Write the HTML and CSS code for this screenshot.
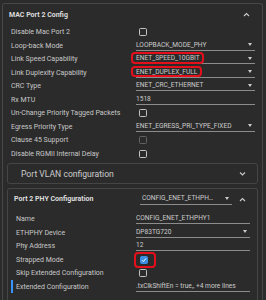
FILE: index.html
```html
<!DOCTYPE html>
<html>
<head>
<meta charset="utf-8">
<link rel="stylesheet" href="styles.css">
</head>
<body>
<div class="panel">
  <div class="panel-head">
    <span class="title">MAC Port 2 Config</span>
    <svg class="chev" width="7" height="5" viewBox="0 0 7 5"><polyline points="1,4 3.5,1.5 6,4" fill="none" stroke="#cccccc" stroke-width="1.1"/></svg>
  </div>
  <div class="rows">
    <div class="row"><span class="label">Disable Mac Port 2</span><span class="val"><span class="cb"></span></span></div>
    <div class="row"><span class="label">Loop-back Mode</span><span class="val"><span class="field select"><span class="txt">LOOPBACK_MODE_PHY</span><span class="arrow"></span></span></span></div>
    <div class="row"><span class="label">Link Speed Capability</span><span class="val"><span class="field select"><span class="txt hl">ENET_SPEED_10GBIT</span><span class="arrow"></span></span></span></div>
    <div class="row"><span class="label">Link Duplexity Capability</span><span class="val"><span class="field select"><span class="txt hl hl2">ENET_DUPLEX_FULL</span><span class="arrow"></span></span></span></div>
    <div class="row"><span class="label">CRC Type</span><span class="val"><span class="field select"><span class="txt">ENET_CRC_ETHERNET</span><span class="arrow"></span></span></span></div>
    <div class="row"><span class="label">Rx MTU</span><span class="val"><span class="field"><span class="txt">1518</span></span></span></div>
    <div class="row"><span class="label">Un-Change Priority Tagged Packets</span><span class="val"><span class="cb"></span></span></div>
    <div class="row"><span class="label">Egress Priority Type</span><span class="val"><span class="field select"><span class="txt">ENET_EGRESS_PRI_TYPE_FIXED</span><span class="arrow"></span></span></span></div>
    <div class="row"><span class="label">Clause 45 Support</span><span class="val"><span class="cb disabled"></span></span></div>
    <div class="row"><span class="label">Disable RGMII Internal Delay</span><span class="val"><span class="cb"></span></span></div>
  </div>

  <div class="card vlan">
    <span class="vlan-title">Port VLAN configuration</span>
    <svg class="chev" width="7" height="5" viewBox="0 0 7 5"><polyline points="1,1.5 3.5,4 6,1.5" fill="none" stroke="#cccccc" stroke-width="1.1"/></svg>
  </div>

  <div class="card phy">
    <div class="phy-head">
      <span class="title phy-title">Port 2 PHY Configuration</span>
      <span class="field select head-select"><span class="txt">CONFIG_ENET_ETHPHY1</span><span class="arrow"></span></span>
      <svg class="chev head-chev" width="7" height="5" viewBox="0 0 7 5"><polyline points="1,4 3.5,1.5 6,4" fill="none" stroke="#cccccc" stroke-width="1.1"/></svg>
    </div>
    <div class="rows phy-rows">
      <div class="row"><span class="label">Name</span><span class="val"><span class="field"><span class="txt">CONFIG_ENET_ETHPHY1</span></span></span></div>
      <div class="row"><span class="label">ETHPHY Device</span><span class="val"><span class="field select"><span class="txt">DP83TG720</span><span class="arrow"></span></span></span></div>
      <div class="row"><span class="label">Phy Address</span><span class="val"><span class="field"><span class="txt">12</span></span></span></div>
      <div class="row"><span class="label">Strapped Mode</span><span class="val"><span class="cb checked hlbox"><svg width="6" height="6" viewBox="0 0 6 6"><polyline points="1,3.2 2.4,4.6 5,1.4" fill="none" stroke="#ffffff" stroke-width="1"/></svg></span></span></div>
      <div class="row"><span class="label">Skip Extended Configuration</span><span class="val"><span class="cb"></span></span></div>
      <div class="row active"><span class="label">Extended Configuration</span><span class="val"><span class="field"><span class="txt">.txClkShiftEn = true,, +4 more lines</span></span></span></div>
    </div>
  </div>
</div>
</body>
</html>
```

FILE: styles.css
```css
html, body {
  margin: 0;
  padding: 0;
}
body {
  background: #2b2b2b;
  font-family: Roboto, "Liberation Sans", sans-serif;
  font-size: 7px;
  color: #cccccc;
  width: 266px;
  height: 300px;
  overflow: hidden;
}
.panel {
  margin: 3px 3px 0 2px;
  border: 1px solid #474747;
  border-bottom: none;
  border-radius: 3px 3px 0 0;
  height: 297px;
  box-sizing: border-box;
}
.panel-head {
  display: flex;
  align-items: center;
  justify-content: space-between;
  height: 21.25px;
  padding: 0 12.5px 0 6px;
}
.title {
  font-weight: bold;
  color: #dddddd;
  white-space: nowrap;
}
.chev {
  display: block;
  flex: none;
}
.row {
  display: grid;
  grid-template-columns: 133px 1fr;
  height: 13.5px;
  align-items: center;
  padding-right: 7px;
}
.label {
  padding-left: 8px;
  white-space: nowrap;
  color: #c8c8c8;
}
.val {
  display: flex;
  align-items: center;
  min-width: 0;
}
.field {
  display: flex;
  align-items: center;
  width: 100%;
  height: 10.5px;
  border-bottom: 1px solid #8c8c8c;
  margin-top: -1px;
  font-size: 6.6px;
  color: #cccccc;
  min-width: 0;
}
.txt {
  flex: 1;
  white-space: nowrap;
  overflow: hidden;
  text-overflow: ellipsis;
  position: relative;
}
.arrow {
  flex: none;
  width: 0;
  height: 0;
  border-left: 2.5px solid transparent;
  border-right: 2.5px solid transparent;
  border-top: 3px solid #cccccc;
  margin: 0 3px 0 4px;
}
.cb {
  display: block;
  width: 8px;
  height: 8px;
  box-sizing: border-box;
  border: 1px solid #c4c4c4;
  border-radius: 1.5px;
  margin-left: 3px;
  position: relative;
}
.cb.disabled {
  border-color: #626262;
}
.cb.checked {
  background: #3a8ee6;
  border-color: #3a8ee6;
  display: flex;
  align-items: center;
  justify-content: center;
  margin-left: 4px;
}
.cb.checked svg {
  display: block;
}
.hl {
  overflow: visible;
}
.hl::after {
  content: "";
  position: absolute;
  left: -5px;
  top: -2px;
  width: 73px;
  height: 11.5px;
  box-sizing: border-box;
  border: 2px solid #e3101c;
  border-radius: 4px;
}
.hl2::after {
  width: 71px;
}
.hlbox::after {
  content: "";
  position: absolute;
  left: -7px;
  top: -4.5px;
  width: 22px;
  height: 16px;
  box-sizing: border-box;
  border: 2px solid #e3101c;
  border-radius: 4px;
}
.card {
  border: 1px solid #454545;
  border-radius: 3px;
  margin: 0 4px;
}
.vlan {
  margin-top: 3px;
  height: 21px;
  box-sizing: border-box;
  display: flex;
  align-items: center;
  justify-content: space-between;
  padding: 0 11.5px 0 13px;
}
.vlan-title {
  font-size: 8.6px;
  color: #cccccc;
}
.phy {
  margin-top: 4px;
  border-bottom: none;
  border-radius: 3px 3px 0 0;
  padding-bottom: 20px;
}
.phy-head {
  display: flex;
  align-items: center;
  height: 20px;
  padding: 0 11.5px 0 6px;
}
.phy-title {
  flex: 0 0 122px;
}
.head-select {
  width: 92px;
  margin-left: 4px;
  flex: none;
}
.head-select .txt {
  flex: 0 1 auto;
  max-width: 72px;
  padding-left: 2px;
}
.head-select .arrow {
  margin-left: auto;
}
.head-chev {
  margin-left: auto;
}
.phy-rows {
  margin-top: 3px;
}
.phy-rows .row {
  grid-template-columns: 128px 1fr;
  padding-right: 7.5px;
}
.row.active {
  background: linear-gradient(#3794ff, #3794ff) 3px 0 / 2px 100% no-repeat;
}
```
